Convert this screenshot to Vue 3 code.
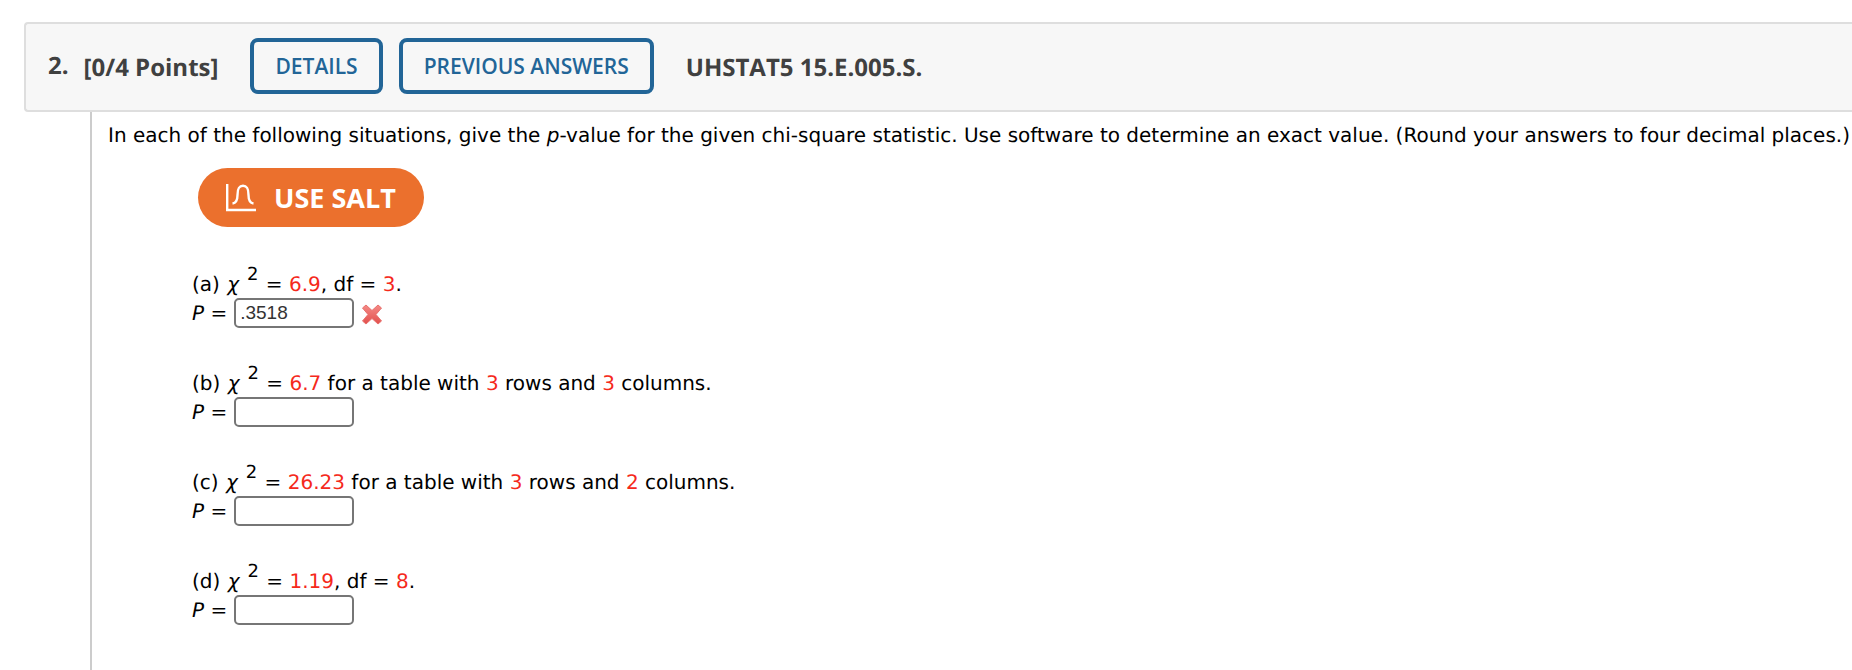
<script setup>
import { reactive } from 'vue'

// Text pieces flagged `v` are the values printed in red.
const parts = reactive([
  {
    id: 'a',
    answer: '.3518',
    wrong: true,
    pieces: [{ t: '6.9', v: true }, { t: ', df = ' }, { t: '3', v: true }, { t: '.' }]
  },
  {
    id: 'b',
    answer: '',
    wrong: false,
    pieces: [
      { t: '6.7', v: true }, { t: ' for a table with ' }, { t: '3', v: true },
      { t: ' rows and ' }, { t: '3', v: true }, { t: ' columns.' }
    ]
  },
  {
    id: 'c',
    answer: '',
    wrong: false,
    pieces: [
      { t: '26.23', v: true }, { t: ' for a table with ' }, { t: '3', v: true },
      { t: ' rows and ' }, { t: '2', v: true }, { t: ' columns.' }
    ]
  },
  {
    id: 'd',
    answer: '',
    wrong: false,
    pieces: [{ t: '1.19', v: true }, { t: ', df = ' }, { t: '8', v: true }, { t: '.' }]
  }
])
</script>

<template>
  <main class="question">
    <header class="bar">
      <span class="number">2.</span>
      <span class="points">[0/4 Points]</span>
      <button type="button" class="outline">DETAILS</button>
      <button type="button" class="outline">PREVIOUS ANSWERS</button>
      <h1 class="code">UHSTAT5 15.E.005.S.</h1>
    </header>

    <section class="body">
      <p class="intro">
        In each of the following situations, give the <i>p</i>-value for the given chi-square
        statistic. Use software to determine an exact value. (Round your answers to four decimal
        places.)
      </p>

      <div class="work">
        <button type="button" class="salt">
          <svg width="30" height="28" viewBox="0 0 30 28" fill="none" stroke="currentColor" stroke-width="2.4" aria-hidden="true">
            <path d="M1.2 0V26H30" />
            <path d="M6.5 19.5C10.5 19 11.5 16 11.5 11C11.5 5 12.5 1.7 17 1.7C21.5 1.7 22.5 5 22.5 11C22.5 16 23.5 19 27.5 19.5" />
          </svg>
          <span>USE SALT</span>
        </button>

        <div v-for="part in parts" :key="part.id" class="part">
          <p class="statement">
            ({{ part.id }}) <i class="chi">χ</i><sup>2</sup> = <span
              v-for="(piece, i) in part.pieces"
              :key="i"
              :class="{ value: piece.v }"
            >{{ piece.t }}</span>
          </p>
          <div class="answer">
            <label :for="'answer-' + part.id"><i>P</i> =</label>
            <input :id="'answer-' + part.id" v-model="part.answer" type="text" />
            <svg v-if="part.wrong" class="cross" width="22" height="24" viewBox="0 0 22 24" role="img" aria-label="incorrect">
              <defs>
                <linearGradient id="cross-fill" x1="0" y1="0" x2="0" y2="1">
                  <stop offset="0" stop-color="#f58a86" />
                  <stop offset="1" stop-color="#e2504d" />
                </linearGradient>
              </defs>
              <path
                d="M5 4L11 9.5L17 4L20.5 7L15 13.5L20.5 20L17 23L11 17.5L5 23L1.5 20L7 13.5L1.5 7Z"
                fill="url(#cross-fill)" stroke="#e8706d" stroke-width="1" stroke-linejoin="round"
              />
            </svg>
          </div>
        </div>
      </div>
    </section>
  </main>
</template>

<style>
body {
  background: #fff;
}
</style>

<style scoped>
.question {
  display: flex;
  flex-direction: column;
  min-height: 100vh;
  box-sizing: border-box;
  padding: 22px 0 0 24px;
  color: #000;
  font: 20px/24px Verdana, "DejaVu Sans", sans-serif;
  text-rendering: geometricPrecision;
}
.bar {
  display: flex;
  align-items: center;
  padding: 14px 22px 16px;
  border: 2px solid #dedede;
  border-right: 0;
  border-radius: 4px 0 0 4px;
  background: #f7f7f7;
  color: #404040;
  font: 700 24px/32px "Open Sans", sans-serif;
  white-space: nowrap;
}
.points {
  margin: 0 32px 0 15px;
  padding-top: 3px;
}
.outline {
  height: 56px;
  margin-right: 16px;
  padding: 0 21px;
  border: 4px solid #226597;
  border-radius: 8px;
  background: transparent;
  color: #226597;
  font: 600 21px/32px "Open Sans", sans-serif;
}
.code {
  margin: 0 0 0 16px;
  padding-top: 3px;
  font: inherit;
}
.body {
  flex: 1;
  margin-left: 66px;
  padding: 11px 0 24px 16px;
  border-left: 2px solid #ccc;
}
p {
  margin: 0;
  white-space: nowrap;
}
.work {
  padding: 21px 0 0 84px;
}
.salt {
  display: flex;
  align-items: center;
  gap: 18px;
  height: 59px;
  margin: 0 0 43px 6px;
  padding: 0 28px;
  border: 0;
  border-radius: 30px;
  background: #eb702d;
  color: #fff;
  font: 700 27px/32px "Open Sans", sans-serif;
}
.part {
  height: 57px;
  margin-bottom: 42px;
}
.part:last-child {
  margin-bottom: 0;
}
.statement {
  height: 28px;
  line-height: 28px;
}
.chi {
  margin-left: 1px;
}
sup {
  margin: 0 1px 0 8px;
  font-size: 18px;
  line-height: 0;
  vertical-align: 11px;
}
.value {
  color: #f5291b;
}
.answer {
  display: flex;
  align-items: center;
}
input {
  box-sizing: border-box;
  width: 120px;
  height: 30px;
  margin: 0 7px;
  padding: 0 4px;
  border: 2px solid #767676;
  border-radius: 5px;
  background: #fff;
  color: #333;
  font: 19px/24px Arial, "Liberation Sans", sans-serif;
}
</style>
